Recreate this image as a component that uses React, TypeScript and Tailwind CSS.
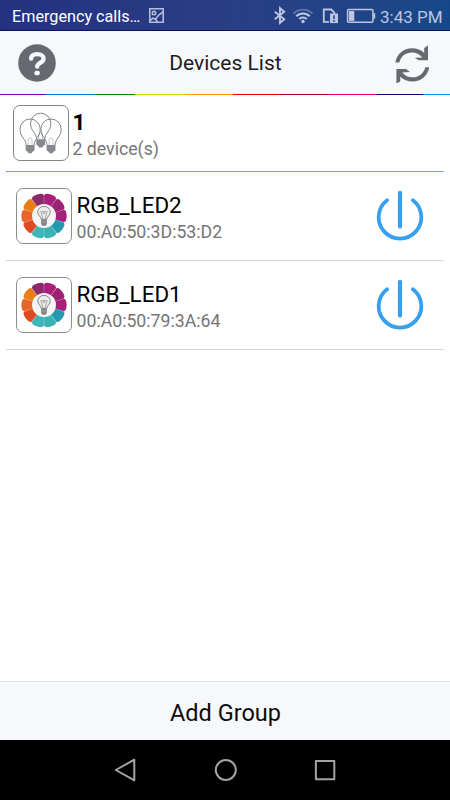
import { useState } from "react";

type Device = {
  name: string;
  address: string;
};

const devices: Device[] = [
  { name: "RGB_LED2", address: "00:A0:50:3D:53:D2" },
  { name: "RGB_LED1", address: "00:A0:50:79:3A:64" },
];

const petals = [
  "#a8207c",
  "#9c2274",
  "#a3217a",
  "#2498ae",
  "#3bb2b6",
  "#3fb5ba",
  "#e04a22",
  "#e8642a",
  "#e97e18",
  "#8c2a6a",
];

function petalPath(index: number) {
  const point = (deg: number, r: number) => {
    const a = ((deg - 90) * Math.PI) / 180;
    return `${(28 + r * Math.cos(a)).toFixed(2)} ${(28 + r * Math.sin(a)).toFixed(2)}`;
  };
  const from = index * 36 + 0.4;
  const to = from + 35.2;
  return `M${point(from, 11)}L${point(from, 21.6)}Q${point(from + 2, 23.2)} ${point(from + 8, 23.4)}Q${point(from + 17.6, 24)} ${point(to - 8, 23.4)}Q${point(to - 2, 23.2)} ${point(to, 21.6)}L${point(to, 11)}Z`;
}

function ColorWheelIcon() {
  return (
    <svg width="56" height="56" viewBox="0 0 56 56" fill="none">
      {petals.map((color, i) => (
        <path key={i} d={petalPath(i)} fill={color} />
      ))}
      <circle cx="28" cy="28" r="12.4" fill="#f5f5f5" />
      <path d="M25.1 31.5C24.8 28.5 21.5 27.4 21.5 23.6a6.5 5.6 0 0 1 13 0c0 3.8-3.3 4.9-3.6 7.9Z" fill="#ececec" stroke="#777" strokeWidth=".9" />
      <path d="M24.3 23.5h7.4M25 24l2 8M31 24l-2 8M27 24l1 2 1-2" stroke="#888" strokeWidth=".7" />
      <path d="M25 31.5h6v4.7l-1.4 1.8h-3.2L25 36.2Z" fill="#808080" />
      <path d="M25.5 33.2h5M25.5 35h5" stroke="#bbb" strokeWidth=".5" />
    </svg>
  );
}

function Bulb({ x, y }: { x: number; y: number }) {
  return (
    <g transform={`translate(${x} ${y})`}>
      <path d="M-4.2 16.5C-4.2 10-10.5 8.5-10.5 0a10.5 10.5 0 0 1 21 0C10.5 8.5 4.2 10 4.2 16.5" stroke="#7d8087" strokeWidth="1" />
      <path d="M-2 17v-5.8a2 2 0 0 1 4 0V17" stroke="#c4c5c9" strokeWidth="1" />
      <path d="M-4.6 16.5h9.2v5.4L2.5 23.5 1.6 25h-3.2l-.9-1.5-2.1-1.6Z" fill="#85888f" />
    </g>
  );
}

function GroupIcon() {
  return (
    <svg width="56" height="56" viewBox="0 0 56 56" fill="none">
      <Bulb x={27.7} y={18} />
      <Bulb x={16.7} y={24} />
      <Bulb x={38.4} y={24} />
    </svg>
  );
}

function PowerIcon() {
  return (
    <svg width="48" height="52" viewBox="0 0 48 52" fill="none" stroke="#35a0ee" strokeLinecap="round">
      <path d="M11.1 10.3a21.3 21.3 0 1 0 25.8 0" strokeWidth="3.8" />
      <path d="M24 2.8v33.8" strokeWidth="4.2" />
    </svg>
  );
}

function StatusIcons() {
  return (
    <svg width="104" height="20" viewBox="0 0 104 20" fill="none" stroke="#bcc6e3">
      {/* bluetooth */}
      <path d="M2.8 6.8 12.2 14.2 8 17.9V3.1L12.2 6.8 2.8 14.2" strokeWidth="1.9" />
      {/* wifi */}
      <path d="M21.5 8.7a13 13 0 0 1 19 0" strokeWidth="1.8" opacity=".4" />
      <path d="M24.3 11.3a9.2 9.2 0 0 1 13.4 0M27.2 14a5.4 5.4 0 0 1 7.6 0" strokeWidth="2" />
      <circle cx="31" cy="16.5" r="1.7" fill="#bcc6e3" stroke="none" />
      {/* sim card */}
      <path d="M57 16.8h-5.2V4.5h7.5l3 3v2" strokeWidth="1.8" />
      <path d="M58 8.5h8v9.6h-8Z" fill="#bcc6e3" stroke="none" />
      <path d="M62 10.3V14M62 15v1.7" stroke="#25407f" strokeWidth="1.5" />
      {/* battery */}
      <rect x="75.6" y="4.6" width="25.3" height="12.6" rx="1" strokeWidth="1.5" />
      <path d="M77 6h5.3v9.9H77Z" fill="#bcc6e3" stroke="none" />
      <path d="M102.3 8.2v5.5" strokeWidth="1.8" />
    </svg>
  );
}

function StatusBar() {
  return (
    <div className="flex h-[31px] items-center border-b border-[#080f66] bg-linear-to-r from-[#233181] via-[#2a3e84] to-[#164889]">
      <span className="ml-3 mt-[3px] w-[129px] whitespace-nowrap text-[16.2px] leading-5 text-white">Emergency calls…</span>
      <svg className="ml-2" width="15" height="15" viewBox="0 0 15 15" fill="none" stroke="#b5bddb" strokeWidth="1.6">
        <path d="M.8.8h13.4v13.4H.8Z" />
        <circle cx="5" cy="5" r="1.7" />
        <path d="M1 12.5l3-2.3 2.4 1L10 6.8l4-2.8M6.5 11l2 3" />
      </svg>
      <div className="ml-auto flex items-center">
        <StatusIcons />
        <span className="ml-1 mr-2 mt-[3px] w-[62px] whitespace-nowrap text-[17px] leading-5 text-[#bcc6e3]">3:43 PM</span>
      </div>
    </div>
  );
}

function Header() {
  return (
    <header className="flex h-[63px] items-center justify-between bg-[#f7f8fc] pl-[18px] pr-5">
      <button type="button" aria-label="Help">
        <svg width="38" height="38" viewBox="0 0 38 38" fill="none">
          <circle cx="19" cy="19" r="18.8" fill="#666a70" />
          <path d="M13.1 14.7c.2-3.1 2.6-4.5 6.1-4.5 3.7 0 6.3 1.6 6.3 4.5 0 4.4-6.3 4-6.3 8" stroke="#f7f8fc" strokeWidth="4.3" strokeLinecap="round" />
          <ellipse cx="19.1" cy="29" rx="2.8" ry="2.3" fill="#f7f8fc" />
        </svg>
      </button>
      <h1 className="mt-0.5 text-[21px] text-[#1c1c1e]">Devices List</h1>
      <button type="button" aria-label="Refresh">
        <svg width="35" height="40" viewBox="7 2.5 35 40" fill="#666b71">
          <path d="M7.3 22C8.8 13.5 15.5 7.8 24 7.8c5 0 9 1.6 12.2 4.6V7.5L40 5v14.8h-9.3L26.7 17.2l7.5-.3C31.5 13.7 28 12 24 12c-6.3 0-11 3.6-12.7 10Z" />
          <path d="M41.3 26.7C40 35.2 33 41 24.6 41c-5 0-9-1.7-12.4-4.8v4.9L8.4 43V28.5H18l4 2.9-7.7.5C16.8 35.1 20.4 36.8 24.6 36.8c6.2 0 11-3.7 12.7-10.1Z" />
        </svg>
      </button>
    </header>
  );
}

function RainbowLine() {
  return (
    <div className="flex h-px shrink-0">
      <div className="w-[46px] bg-[#700098]" />
      <div className="w-[49px] bg-[#0080c8]" />
      <div className="w-[40px] bg-[#008000]" />
      <div className="w-[50px] bg-[#c8d400]" />
      <div className="w-[48px] bg-[#f5a000]" />
      <div className="w-[46px] bg-[#e80000]" />
      <div className="w-[50px] bg-[#b00010]" />
      <div className="w-[48px] bg-[#e00078]" />
      <div className="w-[46px] bg-[#100070]" />
      <div className="flex-1 bg-[#009ad8]" />
    </div>
  );
}

function DeviceRow({ device }: { device: Device }) {
  const [on, setOn] = useState(false);

  return (
    <li className="flex h-[89px] items-center border-b border-[#d3d5de] pl-[10px] pr-5">
      <div className="flex size-14 shrink-0 items-center justify-center rounded-[7px] border border-[#8c8c8c]">
        <ColorWheelIcon />
      </div>
      <div className="ml-[4.5px] flex-1 whitespace-nowrap pt-[3px]">
        <p className="text-[22.4px] leading-7 text-black">{device.name}</p>
        <p className="text-[17.7px] leading-[26px] text-[#757575]">{device.address}</p>
      </div>
      <button type="button" aria-label="Power" aria-pressed={on} onClick={() => setOn(!on)}>
        <PowerIcon />
      </button>
    </li>
  );
}

function NavBar() {
  return (
    <nav className="flex h-[60px] items-center justify-center gap-[76px] bg-black">
      <svg width="24" height="24" viewBox="0 0 24 24" fill="none" stroke="#a3a3a3" strokeWidth="2" strokeLinejoin="round">
        <path d="M2.8 12 21.3 1.7v20.6Z" />
      </svg>
      <svg width="24" height="24" viewBox="0 0 24 24" fill="none" stroke="#a3a3a3" strokeWidth="2">
        <circle cx="12.8" cy="12" r="10" />
      </svg>
      <svg width="24" height="24" viewBox="0 0 24 24" fill="none" stroke="#a3a3a3" strokeWidth="2" strokeLinejoin="round">
        <path d="M2.9 2.9h18.4v18.4H2.9Z" />
      </svg>
    </nav>
  );
}

export default function App() {
  return (
    <div className="flex h-[800px] w-[450px] flex-col overflow-hidden bg-white font-['Roboto',sans-serif]">
      <StatusBar />
      <Header />
      <RainbowLine />
      <main className="flex-1 px-1.5">
        <section className="flex h-[76px] items-center pl-[6.5px]">
          <div className="flex size-14 shrink-0 items-center justify-center rounded-[7px] border border-[#85858a]">
            <GroupIcon />
          </div>
          <div className="ml-1 pt-1">
            <p className="text-[22.5px] font-bold leading-7 text-black">1</p>
            <p className="text-[17.7px] leading-[26px] text-[#757575]">2 device(s)</p>
          </div>
        </section>
        <div className="h-px bg-[#62a8f2]" />
        <ul>
          {devices.map((device) => (
            <DeviceRow key={device.address} device={device} />
          ))}
        </ul>
      </main>
      <button type="button" className="h-[59px] border-t border-[#dfe2e8] bg-[#f7f8fc] pl-px pt-1.5 text-[23.5px] text-[#0c0c0c]">
        Add Group
      </button>
      <NavBar />
    </div>
  );
}
